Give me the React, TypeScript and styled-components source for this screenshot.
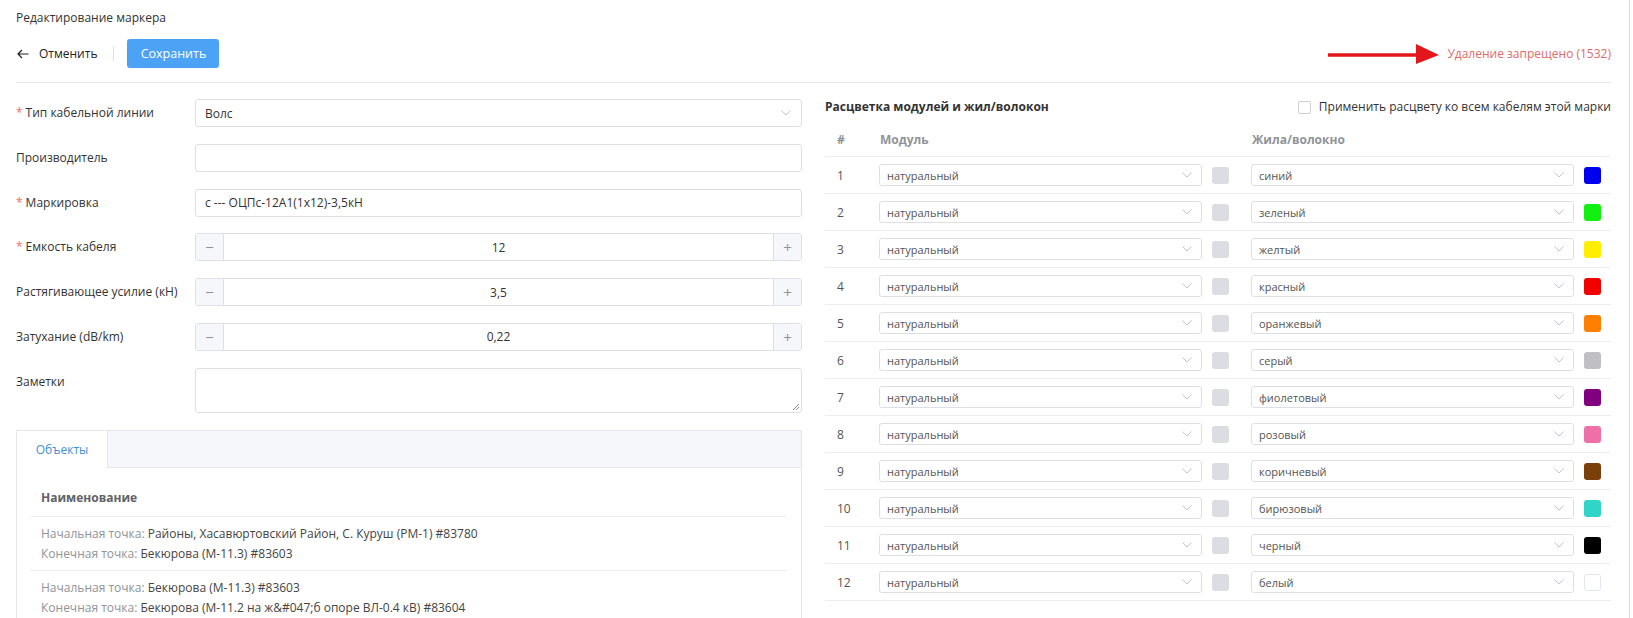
import React from "react";
import styled, { createGlobalStyle } from "styled-components";

const Global = createGlobalStyle`
  html, body { margin: 0; padding: 0; overflow: hidden; background: #fff; }
  body { font-family: "Open Sans", "Noto Sans", sans-serif; color: #333; font-size: 12px; }
  * { box-sizing: border-box; }
`;

const Page = styled.div`
  width: 1630px;
  min-height: 618px;
  border-right: 1px solid #dcdcdc;
  padding: 9px 18px 0 16px;
`;

const Title = styled.div`
  font-size: 12px;
  line-height: 18px;
  color: #333;
`;

const Toolbar = styled.div`
  margin-top: 12px;
  padding-bottom: 14px;
  border-bottom: 1px solid #e4e7ed;
  display: flex;
  align-items: center;
  justify-content: space-between;
`;

const ToolLeft = styled.div`
  display: flex;
  align-items: center;
`;

const BackLink = styled.div`
  display: flex;
  align-items: center;
  gap: 10px;
  padding-left: 1px;
  font-size: 12px;
  color: #222;
`;

const VSep = styled.div`
  width: 1px;
  height: 15px;
  background: #e0e0e0;
  margin: 0 13px 0 16px;
`;

const PrimaryButton = styled.button`
  width: 92px;
  height: 29px;
  border: none;
  border-radius: 3px;
  background: #4ca3f6;
  color: #fff;
  font-family: inherit;
  font-size: 12.5px;
  padding: 0;
`;

const Warning = styled.div`
  display: flex;
  align-items: center;
  gap: 7px;
  color: #e26a6a;
  font-size: 12px;
`;

const Body = styled.div`
  display: grid;
  grid-template-columns: 786px 1fr;
  gap: 23px;
  padding-top: 16px;
`;

const Form = styled.div`
  display: flex;
  flex-direction: column;
  gap: 16.8px;
`;

const FormRow = styled.div`
  display: grid;
  grid-template-columns: 179px 1fr;
  align-items: start;
`;

const Label = styled.div`
  line-height: 28px;
  font-size: 12px;
  color: #333;
  white-space: nowrap;
`;

const Req = styled.span`
  color: #f56c6c;
  margin-right: 3px;
`;

const Field = styled.div<{ $h?: number }>`
  height: ${(p) => p.$h ?? 28}px;
  border: 1px solid #dcdfe6;
  border-radius: 3px;
  display: flex;
  align-items: center;
  justify-content: space-between;
  padding: 0 10px 0 9px;
  font-size: 12px;
  color: #333;
  background: #fff;
  position: relative;
`;

const Resize = styled.svg`
  position: absolute;
  right: 1px;
  bottom: 1px;
`;

const Stepper = styled.div`
  height: 28px;
  display: flex;
  border: 1px solid #dcdfe6;
  border-radius: 3px;
  overflow: hidden;
`;

const StepBtn = styled.div<{ $side: "l" | "r" }>`
  width: 28px;
  background: #f5f7fa;
  ${(p) => (p.$side === "l" ? "border-right" : "border-left")}: 1px solid #dcdfe6;
  display: flex;
  align-items: center;
  justify-content: center;
  color: #909399;
  font-size: 15px;
`;

const StepValue = styled.div`
  flex: 1;
  display: flex;
  align-items: center;
  justify-content: center;
  font-size: 12px;
  color: #333;
`;

const Panel = styled.div`
  margin-top: 17px;
  border: 1px solid #e4e7ed;
  border-bottom: none;
  height: 200px;
`;

const TabBar = styled.div`
  height: 37px;
  background: #f5f7fa;
  border-bottom: 1px solid #e4e7ed;
  display: flex;
`;

const Tab = styled.div`
  width: 91px;
  background: #fff;
  border-right: 1px solid #e4e7ed;
  margin-bottom: -1px;
  color: #3f8fd8;
  font-size: 12px;
  display: flex;
  align-items: center;
  justify-content: center;
`;

const PanelBody = styled.div`
  padding: 13px 14px 0 13px;
`;

const ObjHead = styled.div`
  padding: 8px 11px 9px;
  line-height: 18px;
  font-weight: 700;
  color: #606266;
  font-size: 12px;
  border-bottom: 1px solid #ebeef5;
`;

const ObjRow = styled.div`
  padding: 7px 11px 6px;
  line-height: 20px;
  border-bottom: 1px solid #ebeef5;
  font-size: 12px;
  color: #444;
`;

const Muted = styled.span`
  color: #909399;
`;

const Right = styled.div``;

const RightHead = styled.div`
  display: flex;
  justify-content: space-between;
  align-items: center;
  line-height: 16px;
`;

const SectionTitle = styled.div`
  font-weight: 700;
  font-size: 12px;
  color: #333;
`;

const CheckLabel = styled.label`
  display: flex;
  align-items: center;
  gap: 8px;
  font-size: 12px;
  color: #333;
`;

const CheckBox = styled.span`
  width: 13px;
  height: 13px;
  border: 1px solid #cfcfcf;
  border-radius: 2px;
  background: #fff;
`;

const Table = styled.div`
  margin-top: 7px;
`;

const TRow = styled.div<{ $head?: boolean }>`
  display: grid;
  grid-template-columns: 54px 362px 1fr;
  align-items: center;
  height: ${(p) => (p.$head ? 35 : 37)}px;
  border-bottom: 1px solid #ebeef5;
  ${(p) => (p.$head ? "font-weight: 700; color: #909399;" : "color: #555;")}
  font-size: 12px;
`;

const NumCell = styled.div`
  padding-left: 12px;
`;

const ColorCell = styled.div<{ $pl: number; $pr: number }>`
  display: flex;
  align-items: center;
  gap: 10px;
  padding-left: ${(p) => p.$pl}px;
  padding-right: ${(p) => p.$pr}px;
`;

const MiniSelect = styled.div`
  flex: 1;
  height: 22px;
  border: 1px solid #dcdfe6;
  border-radius: 3px;
  display: flex;
  align-items: center;
  justify-content: space-between;
  padding: 0 9px 0 7px;
  font-size: 11px;
  color: #555;
  font-weight: 400;
`;

const Swatch = styled.div<{ $c: string; $border?: boolean }>`
  width: 17px;
  height: 17px;
  border-radius: 3px;
  background: ${(p) => p.$c};
  border: ${(p) => (p.$border ? "1px solid #e4e7ed" : "none")};
`;

const Chevron = () => (
  <svg width="10" height="6" viewBox="0 0 10 6">
    <path d="M0.5 0.5 L5 5 L9.5 0.5" fill="none" stroke="#c0c4cc" strokeWidth="1" />
  </svg>
);

const fibers: [string, string][] = [
  ["синий", "#0000ee"],
  ["зеленый", "#12f012"],
  ["желтый", "#ffee00"],
  ["красный", "#f20000"],
  ["оранжевый", "#ff8000"],
  ["серый", "#c0c0c4"],
  ["фиолетовый", "#800080"],
  ["розовый", "#ef70a8"],
  ["коричневый", "#7b3f0b"],
  ["бирюзовый", "#30d5c8"],
  ["черный", "#000000"],
  ["белый", "#ffffff"],
];

export default function App() {
  return (
    <>
      <Global />
      <Page>
        <Title>Редактирование маркера</Title>
        <Toolbar>
          <ToolLeft>
            <BackLink>
              <svg width="12" height="10" viewBox="0 0 12 10">
                <path d="M11.5 5 H1 M5 1 L1 5 L5 9" fill="none" stroke="#222" strokeWidth="1.2" />
              </svg>
              Отменить
            </BackLink>
            <VSep />
            <PrimaryButton>Сохранить</PrimaryButton>
          </ToolLeft>
          <Warning>
            <svg width="112" height="22" viewBox="0 0 112 22">
              <path d="M0 12 H92" stroke="#e3161c" strokeWidth="3.5" strokeLinecap="round" />
              <path d="M88 1 L111 12 L88 21 Z" fill="#e3161c" />
            </svg>
            Удаление запрещено (1532)
          </Warning>
        </Toolbar>
        <Body>
          <div>
            <Form>
              <FormRow>
                <Label><Req>*</Req>Тип кабельной линии</Label>
                <Field>Волс<Chevron /></Field>
              </FormRow>
              <FormRow>
                <Label>Производитель</Label>
                <Field />
              </FormRow>
              <FormRow>
                <Label><Req>*</Req>Маркировка</Label>
                <Field>с --- ОЦПс-12А1(1х12)-3,5кН</Field>
              </FormRow>
              <FormRow>
                <Label><Req>*</Req>Емкость кабеля</Label>
                <Stepper>
                  <StepBtn $side="l">−</StepBtn>
                  <StepValue>12</StepValue>
                  <StepBtn $side="r">+</StepBtn>
                </Stepper>
              </FormRow>
              <FormRow>
                <Label>Растягивающее усилие (кН)</Label>
                <Stepper>
                  <StepBtn $side="l">−</StepBtn>
                  <StepValue>3,5</StepValue>
                  <StepBtn $side="r">+</StepBtn>
                </Stepper>
              </FormRow>
              <FormRow>
                <Label>Затухание (dB/km)</Label>
                <Stepper>
                  <StepBtn $side="l">−</StepBtn>
                  <StepValue>0,22</StepValue>
                  <StepBtn $side="r">+</StepBtn>
                </Stepper>
              </FormRow>
              <FormRow>
                <Label>Заметки</Label>
                <Field $h={45}>
                  <Resize width="8" height="8" viewBox="0 0 8 8">
                    <path d="M7 1 L1 7 M7 4 L4 7" stroke="#888" strokeWidth="1" />
                  </Resize>
                </Field>
              </FormRow>
            </Form>
            <Panel>
              <TabBar>
                <Tab>Объекты</Tab>
              </TabBar>
              <PanelBody>
                <ObjHead>Наименование</ObjHead>
                <ObjRow>
                  <div><Muted>Начальная точка: </Muted>Районы, Хасавюртовский Район, С. Куруш (РМ-1) #83780</div>
                  <div><Muted>Конечная точка: </Muted>Бекюрова (М-11.3) #83603</div>
                </ObjRow>
                <ObjRow>
                  <div><Muted>Начальная точка: </Muted>Бекюрова (М-11.3) #83603</div>
                  <div><Muted>Конечная точка: </Muted>{"Бекюрова (М-11.2 на ж&#047;б опоре ВЛ-0.4 кВ) #83604"}</div>
                </ObjRow>
              </PanelBody>
            </Panel>
          </div>
          <Right>
            <RightHead>
              <SectionTitle>Расцветка модулей и жил/волокон</SectionTitle>
              <CheckLabel>
                <CheckBox />
                Применить расцвету ко всем кабелям этой марки
              </CheckLabel>
            </RightHead>
            <Table>
              <TRow $head>
                <NumCell>#</NumCell>
                <ColorCell $pl={1} $pr={12}>Модуль</ColorCell>
                <ColorCell $pl={11} $pr={10}>Жила/волокно</ColorCell>
              </TRow>
              {fibers.map(([name, color], i) => (
                <TRow key={name}>
                  <NumCell>{i + 1}</NumCell>
                  <ColorCell $pl={0} $pr={12}>
                    <MiniSelect>натуральный<Chevron /></MiniSelect>
                    <Swatch $c="#dcdde2" />
                  </ColorCell>
                  <ColorCell $pl={10} $pr={10}>
                    <MiniSelect>{name}<Chevron /></MiniSelect>
                    <Swatch $c={color} $border={color === "#ffffff"} />
                  </ColorCell>
                </TRow>
              ))}
            </Table>
          </Right>
        </Body>
      </Page>
    </>
  );
}
